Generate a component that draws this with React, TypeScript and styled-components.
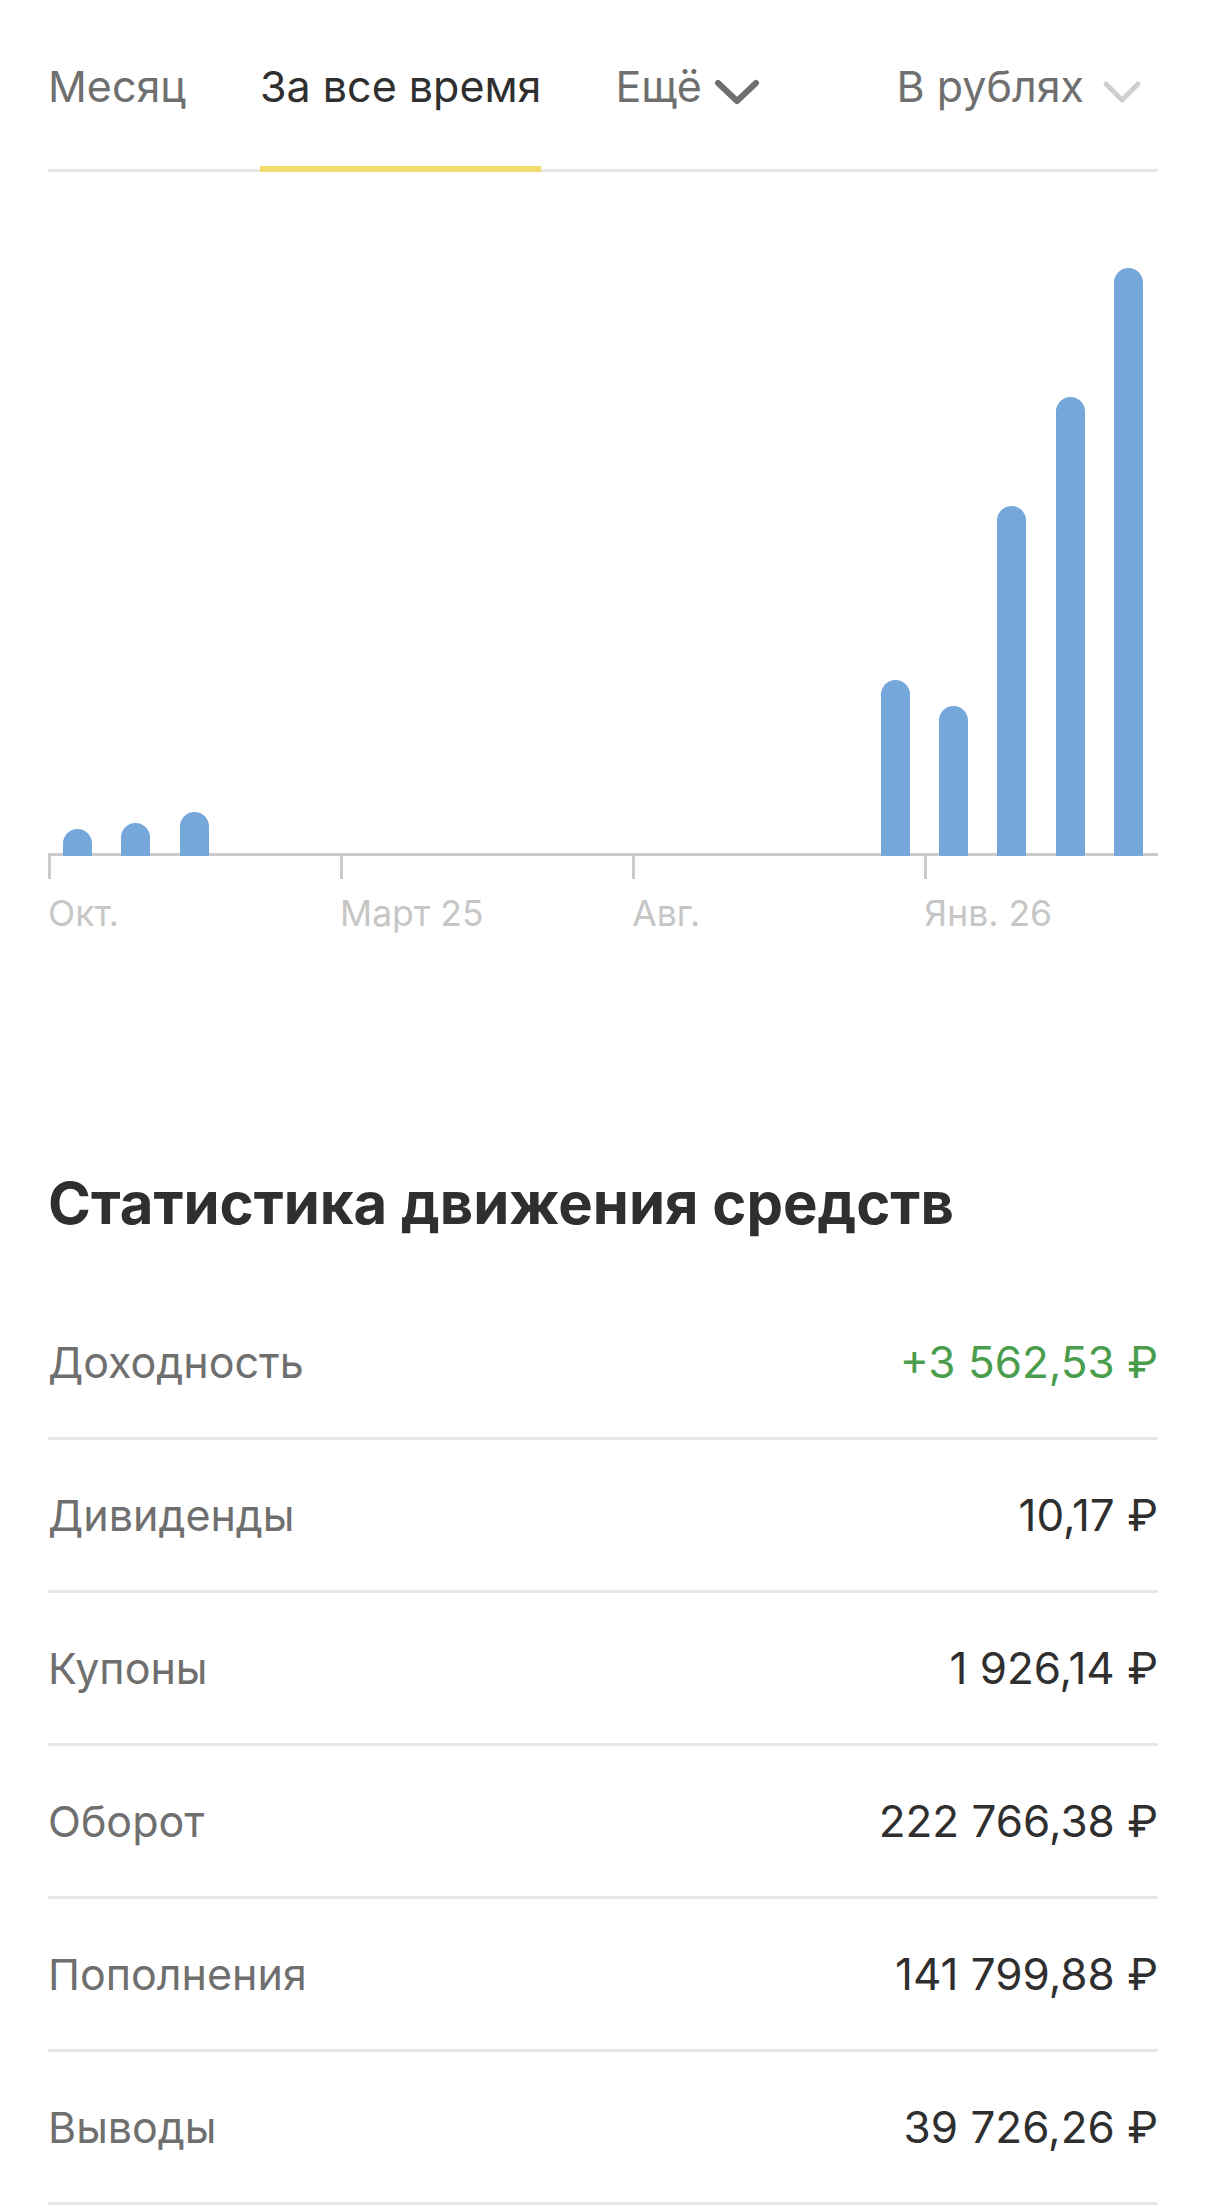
import React from 'react';
import styled, { createGlobalStyle } from 'styled-components';

const COLORS = {
    text: '#2f2f2f',
    grey: '#6f6f6f',
    lightGrey: '#c6c6c6',
    line: '#e7e7e7',
    axis: '#cbcbcb',
    yellow: '#f3dc6b',
    bar: '#75a7db',
    green: '#4a9d4c',
};

const SLOTS = 19;

// высота столбика в px от оси, по месяцам с окт. 24
const barHeights = [27, 33, 44, 0, 0, 0, 0, 0, 0, 0, 0, 0, 0, 0, 176, 150, 350, 459, 588];

const ticks = [
    { label: 'Окт.', span: 5 },
    { label: 'Март 25', span: 5 },
    { label: 'Авг.', span: 5 },
    { label: 'Янв. 26', span: 4 },
];

const stats = [
    { label: 'Доходность', value: '+3 562,53 ₽', positive: true },
    { label: 'Дивиденды', value: '10,17 ₽' },
    { label: 'Купоны', value: '1 926,14 ₽' },
    { label: 'Оборот', value: '222 766,38 ₽' },
    { label: 'Пополнения', value: '141 799,88 ₽' },
    { label: 'Выводы', value: '39 726,26 ₽' },
];

const Chevron = ({ color, light }: { color: string, light?: boolean }) => (
    light ? (
        <svg width="40" height="24" viewBox="0 0 40 24" fill="none">
            <path d="M4 4 L20 20 L36 4" stroke={color} strokeWidth="5" strokeLinecap="round" strokeLinejoin="round" />
        </svg>
    ) : (
        <svg width="46" height="28" viewBox="0 0 46 28" fill="none">
            <path d="M4 5 L23 23 L42 5" stroke={color} strokeWidth="6" strokeLinecap="round" strokeLinejoin="round" />
        </svg>
    )
);

export default function App() {
    return (
        <>
            <GlobalStyle />
            <Page>
                <TabBar>
                    <Tab>Месяц</Tab>
                    <Tab active>За все время</Tab>
                    <Tab>
                        Ещё
                        <ChevronWrap>
                            <Chevron color={COLORS.grey} />
                        </ChevronWrap>
                    </Tab>
                    <Currency>
                        В рублях
                        <ChevronWrap light>
                            <Chevron color="#d0d0d0" light />
                        </ChevronWrap>
                    </Currency>
                </TabBar>

                <Chart>
                    <Plot>
                        {barHeights.map((h, i) => (
                            <BarSlot key={i}>
                                {h > 0 && <Bar style={{ height: h }} />}
                            </BarSlot>
                        ))}
                    </Plot>
                    <Axis>
                        {ticks.map((t) => (
                            <Tick key={t.label} span={t.span}>
                                <TickMark />
                                <TickLabel>{t.label}</TickLabel>
                            </Tick>
                        ))}
                    </Axis>
                </Chart>

                <Title>Статистика движения средств</Title>

                <StatList>
                    {stats.map((s) => (
                        <StatRow key={s.label}>
                            <StatLabel>{s.label}</StatLabel>
                            <StatValue positive={s.positive}>{s.value}</StatValue>
                        </StatRow>
                    ))}
                </StatList>
            </Page>
        </>
    );
}

const GlobalStyle = createGlobalStyle`
    body {
        margin: 0;
        background: #fff;
        font-family: Inter, "Noto Sans", "DejaVu Sans", sans-serif;
        -webkit-font-smoothing: antialiased;
    }
`;

const Page = styled.div`
    padding: 0 47px 40px 48px;
    background: #fff;
`;

const TabBar = styled.div`
    display: flex;
    align-items: stretch;
    gap: 74px;
    padding-top: 60px;
    box-shadow: inset 0 -3px 0 ${COLORS.line};
`;

const Tab = styled.div<{ active?: boolean }>`
    display: flex;
    align-items: center;

    padding-bottom: 53px;
    border-bottom: 6px solid ${(p) => (p.active ? COLORS.yellow : 'transparent')};

    color: ${(p) => (p.active ? COLORS.text : COLORS.grey)};
    font-size: 43px;
    line-height: 53px;
    white-space: nowrap;
`;

const Currency = styled(Tab)`
    margin-left: auto;
    margin-right: 16px;
`;

const ChevronWrap = styled.span<{ light?: boolean }>`
    display: flex;
    margin-left: ${(p) => (p.light ? '18px' : '12px')};
    margin-top: 10px;
`;

const Chart = styled.div`
    display: flex;
    flex-direction: column;
`;

const Plot = styled.div`
    display: grid;
    grid-template-columns: repeat(${SLOTS}, 1fr);
    align-items: end;
    height: 681px;
    border-bottom: 3px solid ${COLORS.axis};
`;

const BarSlot = styled.div`
    display: flex;
    justify-content: center;
    align-items: flex-end;
    margin-bottom: -3px;
`;

const Bar = styled.div`
    width: 29px;
    border-radius: 14.5px 14.5px 0 0;
    background: ${COLORS.bar};
`;

const Axis = styled.div`
    display: grid;
    grid-template-columns: repeat(${SLOTS}, 1fr);
`;

const Tick = styled.div<{ span: number }>`
    grid-column: span ${(p) => p.span};
    display: flex;
    flex-direction: column;
    align-items: flex-start;
`;

const TickMark = styled.div`
    width: 3px;
    height: 23px;
    background: ${COLORS.axis};
`;

const TickLabel = styled.div`
    margin-top: 13px;
    color: ${COLORS.lightGrey};
    font-size: 35.5px;
    line-height: 43px;
    white-space: nowrap;
`;

const Title = styled.h2`
    margin: 233px 0 0;
    color: ${COLORS.text};
    font-size: 58px;
    font-weight: 700;
    line-height: 70px;
`;

const StatList = styled.div`
    margin-top: 49px;
    display: flex;
    flex-direction: column;
`;

const StatRow = styled.div`
    display: flex;
    align-items: center;
    justify-content: space-between;
    height: 150px;
    border-bottom: 3px solid ${COLORS.line};
    line-height: 53px;
`;

const StatLabel = styled.div`
    color: ${COLORS.grey};
    font-size: 43px;
`;

const StatValue = styled.div<{ positive?: boolean }>`
    color: ${(p) => (p.positive ? COLORS.green : COLORS.text)};
    font-size: 44px;
    white-space: nowrap;
`;
